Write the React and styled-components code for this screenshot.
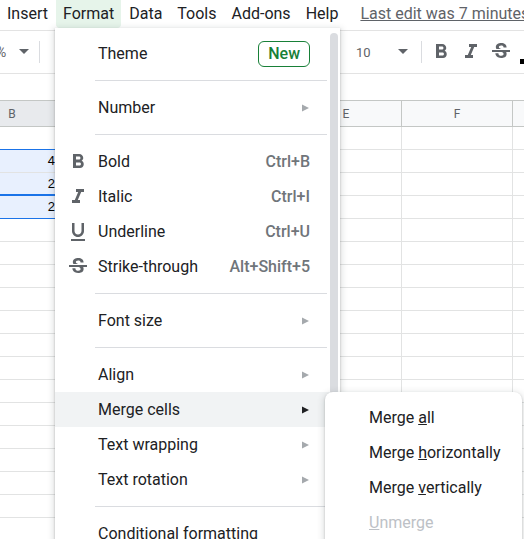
import React from 'react'
import styled, { createGlobalStyle } from 'styled-components'
import { MdFormatBold, MdFormatItalic, MdFormatUnderlined, MdStrikethroughS } from 'react-icons/md'

const GlobalStyle = createGlobalStyle`
  body {
    margin: 0;
    background: #fff;
    font-family: Roboto, "Liberation Sans", Arial, sans-serif;
  }
  * { box-sizing: border-box; }
`

const Page = styled.div`
  position: relative;
  width: 524px;
  height: 539px;
  overflow: hidden;
  background: #fff;
`

const MenuBar = styled.div`
  height: 30px;
  display: flex;
  align-items: flex-start;
  gap: 1px;
  white-space: nowrap;
`

const MenuTab = styled.div`
  height: 28px;
  line-height: 28px;
  padding: 0 7px;
  font-size: 16px;
  color: #202124;
  border-radius: 0 0 4px 4px;
  background: ${p => (p.$open ? '#e6f4ea' : 'transparent')};
`

const LastEdit = styled.div`
  height: 28px;
  line-height: 28px;
  margin-left: 14px;
  font-size: 16px;
  color: #5f6368;
  text-decoration: underline;
`

const Toolbar = styled.div`
  height: 44px;
  border-top: 1px solid #e3e3e3;
  border-bottom: 1px solid #e3e3e3;
  display: flex;
  align-items: center;
  color: #5f6368;
`

const ToolGroup = styled.div`
  display: flex;
  align-items: center;
  flex-shrink: 0;
  margin-left: ${p => p.$left || '0'};
`

const Percent = styled.span`
  font-size: 14px;
  margin-right: 13px;
`

const ToolSep = styled.div`
  width: 1px;
  height: 22px;
  background: #dadce0;
  margin: 0 4px 0 ${p => p.$ml || '10px'};
`

const FontSizeBox = styled.div`
  width: 64px;
  display: flex;
  align-items: center;
  justify-content: space-between;
  padding: 0 8px 0 4px;
  font-size: 13px;
`

const IconBtn = styled.div`
  width: 30px;
  height: 30px;
  display: flex;
  align-items: center;
  justify-content: center;
`

const ColorBar = styled.div`
  width: 4px;
  height: 5px;
  background: #000;
  margin: 18px 0 0 4px;
`

const FormulaGap = styled.div`
  height: 26px;
`

const Sheet = styled.div`
  display: grid;
  grid-template-columns: 95px 115px 116px 111px 111px 111px;
  grid-template-rows: 27px;
  grid-auto-rows: 23px;
  margin-left: -35px;
  width: 659px;
`

const HeadCell = styled.div`
  border-top: 1px solid #c4c7c5;
  border-bottom: 1px solid #c4c7c5;
  border-right: 1px solid #c4c7c5;
  background: ${p => (p.$active ? '#e8eaed' : '#f8f9fa')};
  color: #5f6368;
  font-size: 12px;
  display: flex;
  align-items: center;
  justify-content: center;
`

const Cell = styled.div`
  border-right: 1px solid #e2e3e3;
  border-bottom: ${p => p.$bottom || '1px solid #e2e3e3'};
  background: ${p => (p.$sel ? '#e8f0fe' : '#fff')};
  font-family: "Liberation Sans", Arial, sans-serif;
  font-size: 13px;
  color: #000;
  text-align: right;
  padding-right: 4px;
  line-height: 22px;
`

const Menu = styled.div`
  position: absolute;
  left: 55px;
  top: 28px;
  width: 285px;
  height: 530px;
  background: #fff;
  display: flex;
  box-shadow: 0 2px 6px 2px rgba(60, 64, 67, 0.15), 0 1px 2px rgba(60, 64, 67, 0.3);
`

const MenuList = styled.div`
  width: 275px;
  padding-top: 8px;
`

const Scrollbar = styled.div`
  width: 8px;
  height: 362px;
  margin-top: 5px;
  border-radius: 4px;
  background: #dadce0;
`

const Item = styled.div`
  height: 35px;
  display: flex;
  align-items: center;
  padding-right: 20px;
  font-size: 16px;
  color: ${p => (p.$disabled ? '#bdc1c6' : '#202124')};
  background: ${p => (p.$hover ? '#f1f3f4' : 'transparent')};
  white-space: nowrap;
`

const IconSlot = styled.div`
  width: 43px;
  padding-left: 11px;
  display: flex;
  align-items: center;
  color: #5f6368;
`

const Label = styled.span`
  flex: 1;
`

const Shortcut = styled.span`
  color: #70757a;
  font-weight: 500;
`

const Badge = styled.span`
  height: 26px;
  line-height: 24px;
  padding: 0 9px;
  border: 1px solid #188038;
  border-radius: 6px;
  color: #188038;
  font-weight: 500;
`

const Separator = styled.div`
  height: 1px;
  background: #dadce0;
  margin: 9px 3px 9px 40px;
`

const SubMenu = styled.div`
  position: absolute;
  left: 325px;
  top: 392px;
  width: 197px;
  height: 160px;
  padding-top: 8px;
  background: #fff;
  border-radius: 8px;
  box-shadow: 0 2px 6px 2px rgba(60, 64, 67, 0.15), 0 1px 2px rgba(60, 64, 67, 0.3);
`

const SubItem = styled(Item)`
  padding-left: 44px;
`

const Arrow = ({ dark }) => (
  <svg width="8" height="8" viewBox="0 0 8 8">
    <path d="M0 0.5 L7 4 L0 7.5 Z" fill={dark ? '#202124' : '#a5a9ad'} />
  </svg>
)

const Caret = () => (
  <svg width="10" height="6" viewBox="0 0 10 6">
    <path d="M0 0 H10 L5 5 Z" fill="#5f6368" />
  </svg>
)

const cols = ['B', 'C', 'D', 'E', 'F', 'G']
const values = ['', '4', '2', '2']

function rowBottom(r, c) {
  if (c > 2) return undefined
  if (r === 0) return '1px solid #1a73e8'
  if (r === 2) return '2px solid #1a73e8'
  if (r === 3) return '1px solid #1a73e8'
  return undefined
}

export default function App() {
  const rows = Array.from({ length: 18 }, (_, i) => i)
  return (
    <Page>
      <GlobalStyle />
      <MenuBar>
        <MenuTab>Insert</MenuTab>
        <MenuTab $open>Format</MenuTab>
        <MenuTab>Data</MenuTab>
        <MenuTab>Tools</MenuTab>
        <MenuTab>Add-ons</MenuTab>
        <MenuTab>Help</MenuTab>
        <LastEdit>Last edit was 7 minutes ago</LastEdit>
      </MenuBar>

      <Toolbar>
        <ToolGroup $left="-4px">
          <Percent>%</Percent>
          <Caret />
          <ToolSep $ml="10px" />
        </ToolGroup>
        <ToolGroup $left="auto">
          <FontSizeBox>
            <span>10</span>
            <Caret />
          </FontSizeBox>
          <ToolSep $ml="5px" />
          <IconBtn><MdFormatBold size={24} /></IconBtn>
          <IconBtn><MdFormatItalic size={24} /></IconBtn>
          <IconBtn><MdStrikethroughS size={24} /></IconBtn>
          <ColorBar />
        </ToolGroup>
      </Toolbar>

      <FormulaGap />

      <Sheet>
        {cols.map((c, i) => (
          <HeadCell key={c} $active={i === 0}>{c}</HeadCell>
        ))}
        {rows.map(r =>
          cols.map((c, ci) => (
            <Cell
              key={r + c}
              $sel={ci <= 2 && r >= 1 && r <= 3}
              $bottom={rowBottom(r, ci)}
            >
              {ci === 0 ? values[r] || '' : ''}
            </Cell>
          ))
        )}
      </Sheet>

      <Menu>
        <MenuList>
          <Item>
            <IconSlot />
            <Label>Theme</Label>
            <Badge>New</Badge>
          </Item>
          <Separator />
          <Item>
            <IconSlot />
            <Label>Number</Label>
            <Arrow />
          </Item>
          <Separator />
          <Item>
            <IconSlot><MdFormatBold size={24} /></IconSlot>
            <Label>Bold</Label>
            <Shortcut>Ctrl+B</Shortcut>
          </Item>
          <Item>
            <IconSlot><MdFormatItalic size={24} /></IconSlot>
            <Label>Italic</Label>
            <Shortcut>Ctrl+I</Shortcut>
          </Item>
          <Item>
            <IconSlot><MdFormatUnderlined size={24} /></IconSlot>
            <Label>Underline</Label>
            <Shortcut>Ctrl+U</Shortcut>
          </Item>
          <Item>
            <IconSlot><MdStrikethroughS size={24} /></IconSlot>
            <Label>Strike-through</Label>
            <Shortcut>Alt+Shift+5</Shortcut>
          </Item>
          <Separator />
          <Item>
            <IconSlot />
            <Label>Font size</Label>
            <Arrow />
          </Item>
          <Separator />
          <Item>
            <IconSlot />
            <Label>Align</Label>
            <Arrow />
          </Item>
          <Item $hover>
            <IconSlot />
            <Label>Merge cells</Label>
            <Arrow dark />
          </Item>
          <Item>
            <IconSlot />
            <Label>Text wrapping</Label>
            <Arrow />
          </Item>
          <Item>
            <IconSlot />
            <Label>Text rotation</Label>
            <Arrow />
          </Item>
          <Separator />
          <Item>
            <IconSlot />
            <Label>Conditional formatting</Label>
          </Item>
        </MenuList>
        <Scrollbar />
      </Menu>

      <SubMenu>
        <SubItem>Merge&nbsp;<u>a</u>ll</SubItem>
        <SubItem>Merge&nbsp;<u>h</u>orizontally</SubItem>
        <SubItem>Merge&nbsp;<u>v</u>ertically</SubItem>
        <SubItem $disabled><u>U</u>nmerge</SubItem>
      </SubMenu>
    </Page>
  )
}
